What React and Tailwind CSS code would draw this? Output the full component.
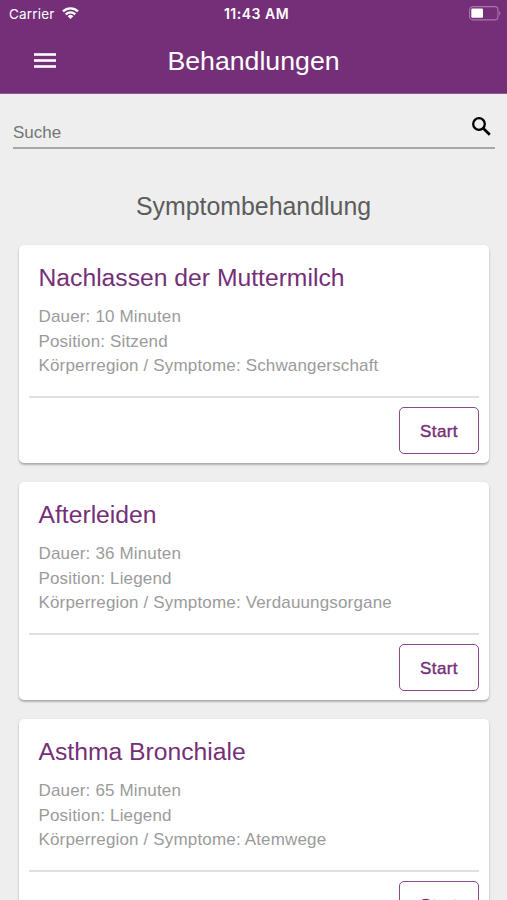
import React from 'react';

const treatments = [
  { id: 1, title: 'Nachlassen der Muttermilch', duration: 10, position: 'Sitzend', region: 'Schwangerschaft' },
  { id: 2, title: 'Afterleiden', duration: 36, position: 'Liegend', region: 'Verdauungsorgane' },
  { id: 3, title: 'Asthma Bronchiale', duration: 65, position: 'Liegend', region: 'Atemwege' },
];

function WifiIcon() {
  return (
    <svg width="17" height="12" viewBox="0 0 17 12" fill="none" stroke="currentColor" strokeWidth="2.3" className="-mt-[1px]">
      <path d="M1 4.4a10.7 10.7 0 0 1 15 0" />
      <path d="M3.7 7.4a6.9 6.9 0 0 1 9.6 0" />
      <path d="M8.5 12 5.7 9.2a4 4 0 0 1 5.6 0z" fill="currentColor" stroke="none" />
    </svg>
  );
}

function MenuIcon() {
  return (
    <svg width="22" height="15" viewBox="0 0 22 15" fill="currentColor">
      <rect y="0.2" width="22" height="2.6" />
      <rect y="6.2" width="22" height="2.6" />
      <rect y="12.2" width="22" height="2.6" />
    </svg>
  );
}

function SearchIcon() {
  return (
    <svg width="19" height="19" viewBox="0 0 19 19" fill="none" stroke="currentColor" strokeWidth="2.3">
      <circle cx="7" cy="7" r="5.8" />
      <path d="M11.2 11.2 17.8 17.8" strokeWidth="2.7" />
    </svg>
  );
}

function BatteryIcon() {
  return (
    <svg width="32" height="15" viewBox="0 0 32 15" fill="none">
      <rect x="0.6" y="0.6" width="28.3" height="13.3" rx="3.2" stroke="#a877a9" strokeWidth="1.1" />
      <rect x="2.3" y="2.6" width="11.7" height="9.2" rx="1" fill="#fff" />
      <path d="M30.2 5v4.8c1.6-.8 1.6-4 0-4.8z" fill="#a877a9" />
    </svg>
  );
}

function StatusBar() {
  return (
    <div className="grid grid-cols-3 items-center h-[27px] pl-[9px] pr-[6px] text-[14px]">
      <div className="flex items-center gap-[7px]">
        <span className="pt-[1px] text-[13.5px] tracking-[0.2px]">Carrier</span>
        <WifiIcon />
      </div>
      <span className="pl-[3px] text-center font-semibold tracking-[0.5px] whitespace-nowrap">11:43 AM</span>
      <div className="flex justify-end">
        <BatteryIcon />
      </div>
    </div>
  );
}

function TreatmentCard({ treatment }) {
  return (
    <div className="h-[218px] shrink-0 rounded-[5px] bg-white px-[10px] shadow-[0_2px_2px_rgba(0,0,0,0.2),0_1px_3px_rgba(0,0,0,0.12)]">
      <div className="h-[153px] px-[9.5px] pt-[17px] border-b-2 border-[#e0e0e0]">
        <h3 className="text-[24.7px] leading-[31px] text-[#752f78] whitespace-nowrap">{treatment.title}</h3>
        <div className="mt-[12px] text-[17px] leading-[24.5px] tracking-[0.16px] text-[#9b9b9b] whitespace-nowrap">
          <p>Dauer: {treatment.duration} Minuten</p>
          <p>Position: {treatment.position}</p>
          <p>Körperregion / Symptome: {treatment.region}</p>
        </div>
      </div>
      <div className="flex justify-end pt-[9px]">
        <button className="w-[80px] h-[47px] pt-[2px] rounded-[5px] border-[1.5px] border-[#874a8a] text-[17px] tracking-[0.4px] font-medium text-[#752f78] [-webkit-text-stroke:0.4px_#752f78]">
          Start
        </button>
      </div>
    </div>
  );
}

export default function App() {
  return (
    <div className="flex flex-col w-[507px] h-[900px] overflow-hidden bg-[#eeeeee] font-['Liberation_Sans',Arial,sans-serif]">
      <header className="h-[94px] shrink-0 bg-[#752f78] border-b border-[#8f5592] text-white font-['Inter','Liberation_Sans',sans-serif]">
        <StatusBar />
        <div className="grid grid-cols-[90px_1fr_90px] items-center h-[67px]">
          <button className="pl-[34px]" aria-label="Menü">
            <MenuIcon />
          </button>
          <h1 className="text-center text-[26.7px] leading-[32px] font-['Liberation_Sans',Arial,sans-serif]">Behandlungen</h1>
        </div>
      </header>

      <div className="flex items-end justify-between h-[55px] shrink-0 ml-[13px] mr-[12px] border-b-2 border-[#a8a8a8]">
        <span className="pb-[4px] text-[17px] leading-[20px] text-[#757575]">Suche</span>
        <div className="mr-[4px] mb-[11px] text-black">
          <SearchIcon />
        </div>
      </div>

      <h2 className="mt-[42px] mb-[24px] text-center text-[24.9px] leading-[30px] text-[#5c5c5c]">Symptombehandlung</h2>

      <main className="flex flex-col gap-[19px] pl-[19px] pr-[18px]">
        {treatments.map(t => (
          <TreatmentCard key={t.id} treatment={t} />
        ))}
      </main>
    </div>
  );
}
